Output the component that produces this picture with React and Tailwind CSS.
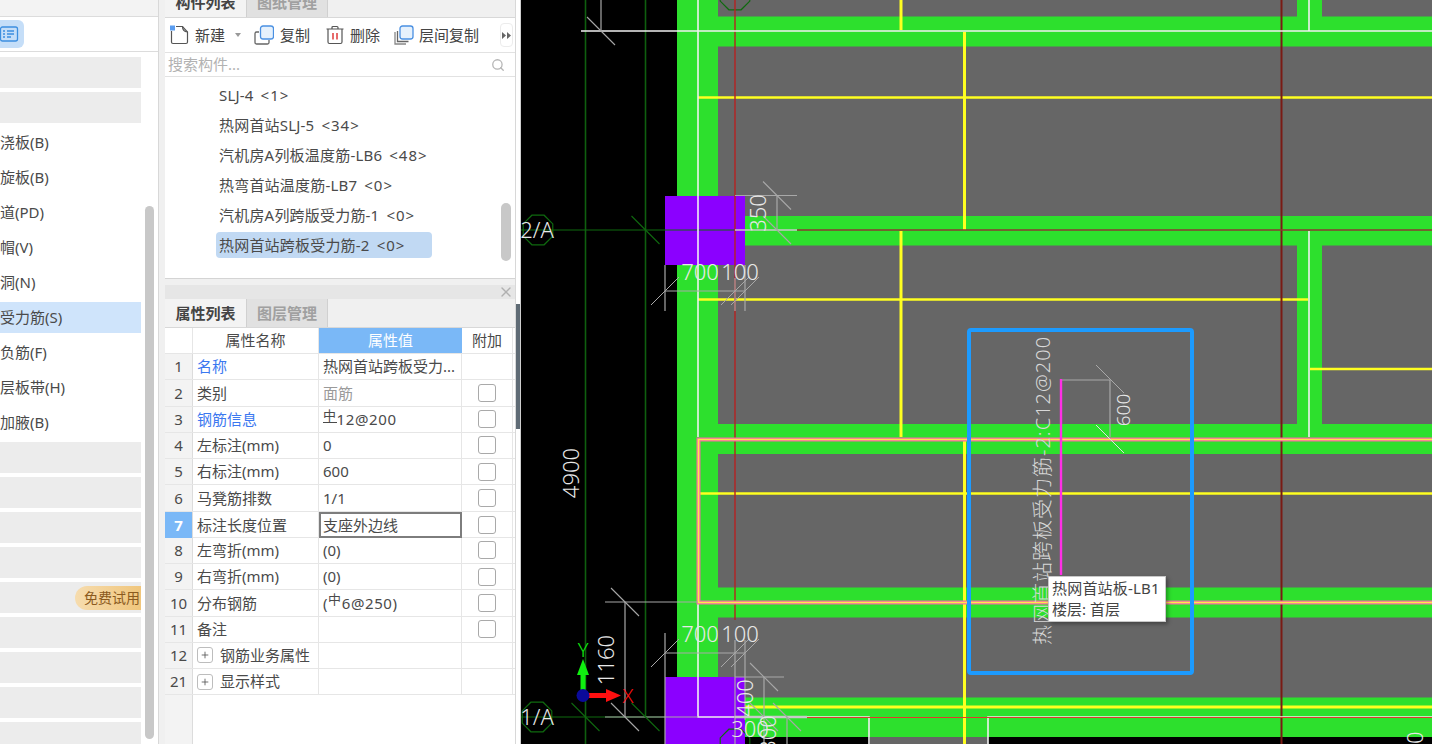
import { Search, X, Plus } from 'lucide-react'

const FONT = { fontFamily: '"Noto Sans", "Noto Sans CJK SC", sans-serif' }

const sideRows = [
  { kind: 'blank' },
  { kind: 'blank' },
  { label: '浇板(B)' },
  { label: '旋板(B)' },
  { label: '道(PD)' },
  { label: '帽(V)' },
  { label: '洞(N)' },
  { label: '受力筋(S)', active: true },
  { label: '负筋(F)' },
  { label: '层板带(H)' },
  { label: '加腋(B)' },
  { kind: 'blank' },
  { kind: 'blank' },
  { kind: 'blank' },
  { kind: 'blank' },
  { kind: 'trial' },
  { kind: 'blank' },
  { kind: 'blank' },
  { kind: 'blank' },
  { kind: 'blank' },
]

const components = [
  { name: 'SLJ-4', count: '<1>' },
  { name: '热网首站SLJ-5', count: '<34>' },
  { name: '汽机房A列板温度筋-LB6', count: '<48>' },
  { name: '热弯首站温度筋-LB7', count: '<0>' },
  { name: '汽机房A列跨版受力筋-1', count: '<0>' },
  { name: '热网首站跨板受力筋-2', count: '<0>' },
]

const props = [
  { no: 1, name: '名称', value: '热网首站跨板受力...', link: true, noCheck: true },
  { no: 2, name: '类别', value: '面筋', muted: true },
  { no: 3, name: '钢筋信息', value: '12@200', link: true, grade: 'bar' },
  { no: 4, name: '左标注(mm)', value: '0' },
  { no: 5, name: '右标注(mm)', value: '600' },
  { no: 6, name: '马凳筋排数', value: '1/1' },
  { no: 7, name: '标注长度位置', value: '支座外边线', editing: true },
  { no: 8, name: '左弯折(mm)', value: '(0)' },
  { no: 9, name: '右弯折(mm)', value: '(0)' },
  { no: 10, name: '分布钢筋', value: '6@250)', grade: 'paren' },
  { no: 11, name: '备注', value: '' },
  { no: 12, name: '钢筋业务属性', group: true },
  { no: 21, name: '显示样式', group: true },
]

function Sidebar() {
  return (
    <div className="w-[159px] h-full shrink-0 bg-white border-r border-[#d8d8d8] relative overflow-hidden">
      <div className="h-[17px] bg-[#f3f3f3] border-b border-[#dcdcdc]" />
      <div className="h-[35px] border-b border-[#dcdcdc] flex items-center">
        <div className="w-6 h-7 bg-[#c5def8] rounded-r-md flex items-center">
          <svg width="19" height="18" viewBox="0 0 19 18" fill="none" stroke="#3d8fe0" strokeWidth="1.3">
            <rect x="0.5" y="2" width="17" height="14" rx="2" />
            <path d="M3 6h2M7 6h7M3 9h2M7 9h7M3 12h2M7 12h4" />
          </svg>
        </div>
      </div>
      <div className="flex flex-col gap-1 w-[141px] pt-[5px]">
        {sideRows.map((row, i) => {
          if (row.kind === 'blank') return <div key={i} className="h-[31px] shrink-0 bg-[#ececec]" />
          if (row.kind === 'trial')
            return (
              <div key={i} className="h-[31px] shrink-0 bg-[#ececec] flex justify-end items-center">
                <span className="h-6 pl-[9px] pr-[1px] flex items-center rounded-l-xl bg-gradient-to-r from-[#f6dcae] to-[#f0c67c] text-sm text-[#8b5a1e]">
                  免费试用
                </span>
              </div>
            )
          return (
            <div
              key={i}
              className={`h-[31px] shrink-0 flex items-center text-[15px] text-[#4a4a4a] ${row.active ? 'bg-[#cfe4fb]' : ''}`}
            >
              {row.label}
            </div>
          )
        })}
      </div>
      <div className="absolute left-[145px] top-[206px] w-[9px] h-[533px] rounded-full bg-[#c8c8c8]" />
    </div>
  )
}

function Tabs({ first, second, className }) {
  return (
    <div className={`flex bg-[#f0f0f0] border-b border-[#d8d8d8] ${className}`}>
      <div className="w-[81px] flex items-center justify-center font-bold text-[15px] text-[#444] bg-[#f3f3f3]">{first}</div>
      <div className="w-[82px] flex items-center justify-center font-bold text-[15px] text-[#a0a0a0] bg-[#e1e1e1] border-x border-[#d0d0d0]">
        {second}
      </div>
    </div>
  )
}

function NewIcon() {
  return (
    <svg width="20" height="20" viewBox="0 0 20 20" fill="none" stroke="#555" strokeWidth="1.2">
      <path d="M1.5 6v11a1.5 1.5 0 0 0 1.5 1.5h13a1.5 1.5 0 0 0 1.5-1.5V7l-5-5.5H6" />
      <path d="M12.5 1.5c0 3 1 5 5 5.5" />
      <rect x="0" y="0.5" width="5" height="5" fill="#5b9df0" stroke="none" />
    </svg>
  )
}

function CopyIcon({ offset }) {
  return (
    <svg width="20" height="20" viewBox="0 0 20 20" fill="none" strokeWidth="1.3">
      <path d={offset ? 'M1 7v12h11' : 'M5 7H2.5A1.5 1.5 0 0 0 1 8.5v9A1.5 1.5 0 0 0 2.5 19h11a1.5 1.5 0 0 0 1.5-1.5V15'} stroke={offset ? '#888' : '#666'} />
      {offset && <path d="M3.5 6v10.5h11" stroke="#666" />}
      <rect x={offset ? '6' : '6.5'} y="1" width="13" height="13" rx="2.5" stroke="#4a90e2" fill="#e6f1fc" />
    </svg>
  )
}

function TrashIcon() {
  return (
    <svg width="18" height="20" viewBox="0 0 18 20" fill="none" stroke="#555" strokeWidth="1.2">
      <path d="M0.5 4h17M6 4V2.5A1 1 0 0 1 7 1.5h4a1 1 0 0 1 1 1V4M2 4v13a1.5 1.5 0 0 0 1.5 1.5h11A1.5 1.5 0 0 0 16 17V4" />
      <path d="M7 8v6.5M11 8v6.5" stroke="#e03b3b" strokeWidth="1.5" />
    </svg>
  )
}

function ComponentPanel() {
  return (
    <div className="h-[279px] shrink-0 flex flex-col border-b border-[#d4d4d4] bg-white">
      <Tabs first="构件列表" second="图纸管理" className="h-[18px] items-stretch overflow-hidden [&>div]:pb-[12px]" />
      <div className="h-[35px] flex items-center text-[15px] text-[#444] border-b border-[#e2e2e2] pl-[5px]">
        <NewIcon />
        <span className="ml-[5px]">新建</span>
        <svg width="6" height="4" viewBox="0 0 6 4" className="ml-[10px] mr-[13px]" fill="#999"><path d="M0 0h6L3 4z" /></svg>
        <CopyIcon />
        <span className="ml-[6px]">复制</span>
        <span className="ml-[16px]"><TrashIcon /></span>
        <span className="ml-[6px]">删除</span>
        <span className="ml-[14px]"><CopyIcon offset /></span>
        <span className="ml-[5px]">层间复制</span>
        <div className="ml-[21px] w-[13px] h-[24px] rounded border border-[#ececec] flex items-center justify-center text-[#666]">
          <svg width="9" height="7" viewBox="0 0 9 7" fill="#666"><path d="M0 0l4 3.5L0 7zM5 0l4 3.5L5 7z" /></svg>
        </div>
      </div>
      <div className="h-[24px] flex items-center justify-between pl-[3px] pr-[10px] border-b border-[#e2e2e2] text-[15px] text-[#b2b2b2]">
        <span>搜索构件...</span>
        <Search size={14} strokeWidth={2.2} className="text-[#b5b5b5]" />
      </div>
      <div className="relative flex-1 flex flex-col pt-[3px] pl-[51px] text-[15px] text-[#4a4a4a]">
        {components.map((item, i) => (
          <div key={item.name} className="h-[30px] flex items-center">
            <span className={`pl-[3px] pr-[27px] h-[26px] flex items-center gap-[7px] rounded-sm whitespace-pre ${i === 5 ? 'bg-[#c1d9f3]' : ''}`}>
              <span className="tracking-[0.2px]">{item.name}</span>
              <span className="tracking-[1px]">{item.count}</span>
            </span>
          </div>
        ))}
        <div className="absolute right-[4px] top-[126px] w-[10px] h-[58px] rounded-full bg-[#c8c8c8]" />
      </div>
    </div>
  )
}

function GradeMark({ bar }) {
  return (
    <span className={`text-[13px] leading-[13px] -mt-[6px] ${bar ? 'border-b border-[#4a4a4a]' : ''}`}>中</span>
  )
}

function PropRow({ row }) {
  const active = row.editing
  const valueBox = active
    ? 'border-2 border-[#7d7d7d] pl-[2px]'
    : 'border-r border-[#e6e6e6] pl-[4px]'
  return (
    <div className="grid grid-cols-[28px_126px_143px_51px] h-[26.25px] border-b border-[#e6e6e6] text-[15px] text-[#4a4a4a]">
      <div className={`flex items-center justify-center border-r border-[#dcdcdc] ${active ? 'bg-[#7ab8f7] text-white font-bold' : 'bg-[#f3f3f3]'}`}>
        {row.no}
      </div>
      <div className={`flex items-center border-r border-[#e6e6e6] pl-[4px] ${row.link ? 'text-[#3b78f0]' : ''}`}>
        {row.group && (
          <span className="w-[16px] h-[16px] mr-[7px] rounded-[3px] border border-[#bdbdbd] flex items-center justify-center">
            <Plus size={10} strokeWidth={2} className="text-[#555]" />
          </span>
        )}
        {row.name}
      </div>
      <div className={`flex items-center whitespace-nowrap ${valueBox} ${row.muted ? 'text-[#9a9a9a]' : ''} ${row.grade ? 'tracking-[0.6px]' : ''}`}>
        {row.grade === 'paren' && '('}
        {row.grade && <GradeMark bar={row.grade === 'bar'} />}
        {row.value}
      </div>
      <div className="flex items-center justify-center border-r border-[#e6e6e6]">
        {!row.group && !row.noCheck && <span className="w-[18px] h-[18px] rounded-[3px] border border-[#a9a9a9] bg-white" />}
      </div>
    </div>
  )
}

function PropertyPanel() {
  return (
    <div className="flex-1 min-h-0 flex flex-col bg-white">
      <div className="h-[14px] bg-[#e6e6e6] flex items-center justify-end pr-[1px] text-[#b0b0b0]">
        <X size={16} />
      </div>
      <Tabs first="属性列表" second="图层管理" className="h-[29px] items-stretch" />
      <div className="grid grid-cols-[28px_126px_143px_51px] h-[26px] border-b border-[#e6e6e6] text-[15px] text-[#4a4a4a]">
        <div className="border-r border-[#e6e6e6]" />
        <div className="flex items-center justify-center border-r border-[#e6e6e6]">属性名称</div>
        <div className="flex items-center justify-center bg-[#7ab8f7] text-white">属性值</div>
        <div className="flex items-center justify-center border-r border-[#e6e6e6]">附加</div>
      </div>
      {props.map(row => <PropRow key={row.no} row={row} />)}
      <div className="flex-1 w-[28px] bg-[#f3f3f3] border-r border-[#dcdcdc]" />
    </div>
  )
}

function Dim({ x1, y1, x2, y2, c = '#a8a8a8', w = 1.2 }) {
  return <line x1={x1} y1={y1} x2={x2} y2={y2} stroke={c} strokeWidth={w} />
}

// tick mark of a dimension line, drawn through (x, y)
function Tick({ x, y, r = 14, c = '#a8a8a8' }) {
  return <line x1={x - r} y1={y - r} x2={x + r} y2={y + r} stroke={c} strokeWidth="1.1" />
}

function Octagon({ x, y }) {
  const pts = []
  for (let i = 0; i < 8; i++) {
    const a = (Math.PI / 4) * i + Math.PI / 8
    pts.push(`${x + 16 * Math.cos(a)},${y + 16 * Math.sin(a)}`)
  }
  return <polygon points={pts.join(' ')} fill="none" stroke="#0f6a0f" strokeWidth="1.2" />
}

function Label({ x, y, size = 22, rotate, children, c = '#e8e8e8', anchor = 'middle', spacing }) {
  return (
    <text
      x={x}
      y={y}
      fontSize={size}
      fill={c}
      textAnchor={anchor}
      letterSpacing={spacing}
      fontWeight="300"
      transform={rotate ? `rotate(-90 ${x} ${y})` : undefined}
      style={{ fontFamily: '"Noto Sans", "Noto Sans CJK SC", sans-serif' }}
    >
      {children}
    </text>
  )
}

function CadCanvas() {
  const green = '#2de02d'
  const yellow = '#ffff20'
  return (
    <div className="relative flex-1 h-full bg-black border-l border-[#cfcfcf] overflow-hidden">
      <svg width="911" height="744" viewBox="521 0 911 744" className="block">
        {/* grey slab and green beams */}
        <rect x="718" y="0" width="714" height="737" fill="#666666" />
        <rect x="870" y="737" width="118" height="7" fill="#666666" />
        <rect x="677" y="0" width="41" height="677" fill={green} />
        {[[16.5, 30], [216, 29.5], [424, 30], [587.5, 30], [697.5, 39.5]].map(([y, h]) => (
          <rect key={y} x="718" y={y} width="714" height={h} fill={green} />
        ))}
        <rect x="1297" y="0" width="25" height="17" fill={green} />
        <rect x="1297" y="245" width="25" height="180" fill={green} />

        {/* yellow rebar */}
        <g stroke={yellow} strokeWidth="2.4">
          <line x1="698" y1="97.5" x2="1432" y2="97.5" />
          <line x1="698" y1="299.5" x2="1308" y2="299.5" />
          <line x1="1310" y1="369" x2="1432" y2="369" />
          <line x1="698" y1="493.5" x2="1432" y2="493.5" />
          <line x1="698" y1="707" x2="1432" y2="707" strokeWidth="3" />
          <line x1="901" y1="0" x2="901" y2="30" strokeWidth="3" />
          <line x1="964.5" y1="32" x2="964.5" y2="230" strokeWidth="3" />
          <line x1="901" y1="231" x2="901" y2="437" strokeWidth="3" />
          <line x1="964.5" y1="440" x2="964.5" y2="744" strokeWidth="3" />
        </g>

        {/* axis lines */}
        <g stroke="#0f5f0f" strokeWidth="1.6">
          <line x1="585.5" y1="0" x2="585.5" y2="744" />
          <line x1="645.5" y1="0" x2="645.5" y2="717" />
        </g>
        <line x1="521" y1="717" x2="665" y2="717" stroke="#0f6a0f" />
        <Octagon x={538} y={230} />
        <Octagon x={537} y={717} />
        <Octagon x={735} y={-5} />
        <line x1="1281.5" y1="0" x2="1281.5" y2="744" stroke="#7a1a14" strokeWidth="2" />
        <line x1="797" y1="230" x2="1432" y2="230" stroke="#8a3a30" strokeWidth="1.4" />

        {/* columns */}
        <rect x="665" y="196" width="80" height="69" fill="#8b00ff" />
        <rect x="665" y="677" width="80" height="67" fill="#8b00ff" />
        <Octagon x={735} y={744} />
        <line x1="521" y1="230" x2="735" y2="230" stroke="#0f6a0f" />
        <line x1="735" y1="0" x2="735" y2="620" stroke="#b52222" strokeWidth="1.4" />

        {/* white outlines */}
        <g stroke="#f0f0f0" strokeWidth="1.6" fill="none">
          <path d="M581 31H1432" />
          <path d="M698 0V437" />
          <path d="M1309 0V31M1309 231V437" />
          <path d="M698 604V717H869V744" />
          <path d="M988 744V717H1432" />
        </g>
        <line x1="807" y1="717.5" x2="1432" y2="717.5" stroke="#e23a2a" strokeWidth="1.2" />
        <line x1="735" y1="230" x2="797" y2="230" stroke="#c8c8c8" strokeWidth="1.4" />

        {/* selected plate outline */}
        <g stroke="#f56aa8" fill="none" strokeWidth="4">
          <path d="M1432 439.5H698.5V602.5H1432" />
        </g>
        <g stroke="#ffe84a" fill="none" strokeWidth="1.6">
          <path d="M1432 439.5H698.5V602.5H1432" />
        </g>

        {/* dimensions */}
        <Dim x1="601" y1="0" x2="601" y2="31" />
        <Tick x={601} y={31} />
        <Dim x1="735" y1="195.5" x2="797" y2="195.5" />
        <Dim x1="777" y1="195.5" x2="777" y2="230" />
        <Tick x={777} y={195.5} />
        <Tick x={777} y={230} />
        <Dim x1="665" y1="265" x2="665" y2="311" />
        <Dim x1="665" y1="291" x2="745" y2="291" />
        <Dim x1="735" y1="278" x2="735" y2="311" />
        <Dim x1="745" y1="265" x2="745" y2="311" />
        {[665, 735, 745].map(x => <line key={x} x1={x - 14} y1={305} x2={x + 14} y2={277} stroke="#a8a8a8" />)}

        <Dim x1="605" y1="602" x2="698" y2="602" />
        <Dim x1="625" y1="602" x2="625" y2="717" />
        <Dim x1="605" y1="717" x2="698" y2="717" />
        <Tick x={625} y={602} />
        <Tick x={625} y={717} />
        <Tick x={585.5} y={717} c="#0f6a0f" />
        <Tick x={645.5} y={717} c="#0f6a0f" />
        <Tick x={645.5} y={230} c="#0f6a0f" />
        <Dim x1="665" y1="633" x2="665" y2="744" />
        <Dim x1="665" y1="653" x2="745" y2="653" />
        <Dim x1="735" y1="640" x2="735" y2="744" />
        <Dim x1="745" y1="640" x2="745" y2="720" />
        {[665, 735, 745].map(x => <line key={x} x1={x - 14} y1={667} x2={x + 14} y2={639} stroke="#a8a8a8" />)}
        <Dim x1="735" y1="677" x2="784" y2="677" />
        <Dim x1="764" y1="677" x2="764" y2="744" />
        <Dim x1="735" y1="717" x2="807" y2="717" c="#c8c8c8" w={2.4} />
        <Dim x1="787" y1="717" x2="787" y2="744" />
        <Tick x={764} y={677} />
        <Tick x={787} y={717} />
        <Tick x={764} y={717} />

        <Dim x1="1061" y1="380" x2="1110" y2="380" />
        <Dim x1="1110" y1="380" x2="1110" y2="437" />
        <line x1="1096" y1="365" x2="1124" y2="393" stroke="#a8a8a8" />
        <line x1="1096" y1="425" x2="1124" y2="453" stroke="#e0e0e0" />
        <line x1="1061" y1="379" x2="1061" y2="575" stroke="#ff2fe6" strokeWidth="2.4" />

        {/* blue selection box */}
        <rect x="969" y="330" width="223" height="343" rx="2" fill="none" stroke="#1c9bff" strokeWidth="4" />

        {/* text */}
        <Label x={537} y={238}>2/A</Label>
        <Label x={537} y={725}>1/A</Label>
        <Label x={579} y={473} rotate>4900</Label>
        <Label x={700} y={280}>700</Label>
        <Label x={740} y={280}>100</Label>
        <Label x={700} y={642}>700</Label>
        <Label x={740} y={642}>100</Label>
        <Label x={766} y={213} rotate>350</Label>
        <Label x={614} y={660} rotate>1160</Label>
        <Label x={753} y={698} rotate>400</Label>
        <Label x={750} y={737}>300</Label>
        <Label x={776} y={734} rotate>300</Label>
        <Label x={1130} y={410} rotate size={19}>600</Label>
        <Label x={1050} y={645} rotate size={20} anchor="start" c="#d8d8d8" spacing={1}>热网首站跨板受力筋-2:C12@200</Label>
        <Label x={1423} y={744} rotate>00</Label>

        {/* axis gizmo */}
        <line x1="583" y1="690" x2="583" y2="672" stroke="#10f010" strokeWidth="5" />
        <path d="M583 659l6 16h-12z" fill="#10f010" />
        <line x1="588" y1="695.5" x2="608" y2="695.5" stroke="#ff1010" strokeWidth="5" />
        <path d="M621 695.5l-15 6.5v-13z" fill="#ff1010" />
        <circle cx="583" cy="695.5" r="6.5" fill="#0a0a9a" />
        <Label x={583} y={657} size={20} c="#10f010">Y</Label>
        <Label x={628} y={703} size={20} c="#ff1010">X</Label>
      </svg>
      <div className="absolute left-[527px] top-[576px] w-[118px] h-[46px] bg-white border border-[#c8c8c8] shadow-[2px_2px_4px_rgba(0,0,0,0.35)] pl-[3px] text-[15px] leading-[21px] pt-[1px] text-[#444] whitespace-nowrap">
        <div className="tracking-[0.2px]">热网首站板-LB1</div>
        <div>楼层: 首层</div>
      </div>
    </div>
  )
}

export default function App() {
  return (
    <div className="flex w-[1432px] h-[744px] overflow-hidden bg-[#f0f0f0]" style={FONT}>
      <Sidebar />
      <div className="w-[6px] shrink-0" />
      <div className="w-[351px] shrink-0 h-full flex flex-col border-r border-[#d8d8d8]">
        <ComponentPanel />
        <div className="h-[6px] shrink-0" />
        <PropertyPanel />
      </div>
      <div className="w-[4px] shrink-0 bg-white relative">
        <div className="absolute left-0 top-[304px] w-[4px] h-[125px] bg-[#5f6b75]" />
      </div>
      <CadCanvas />
    </div>
  )
}
